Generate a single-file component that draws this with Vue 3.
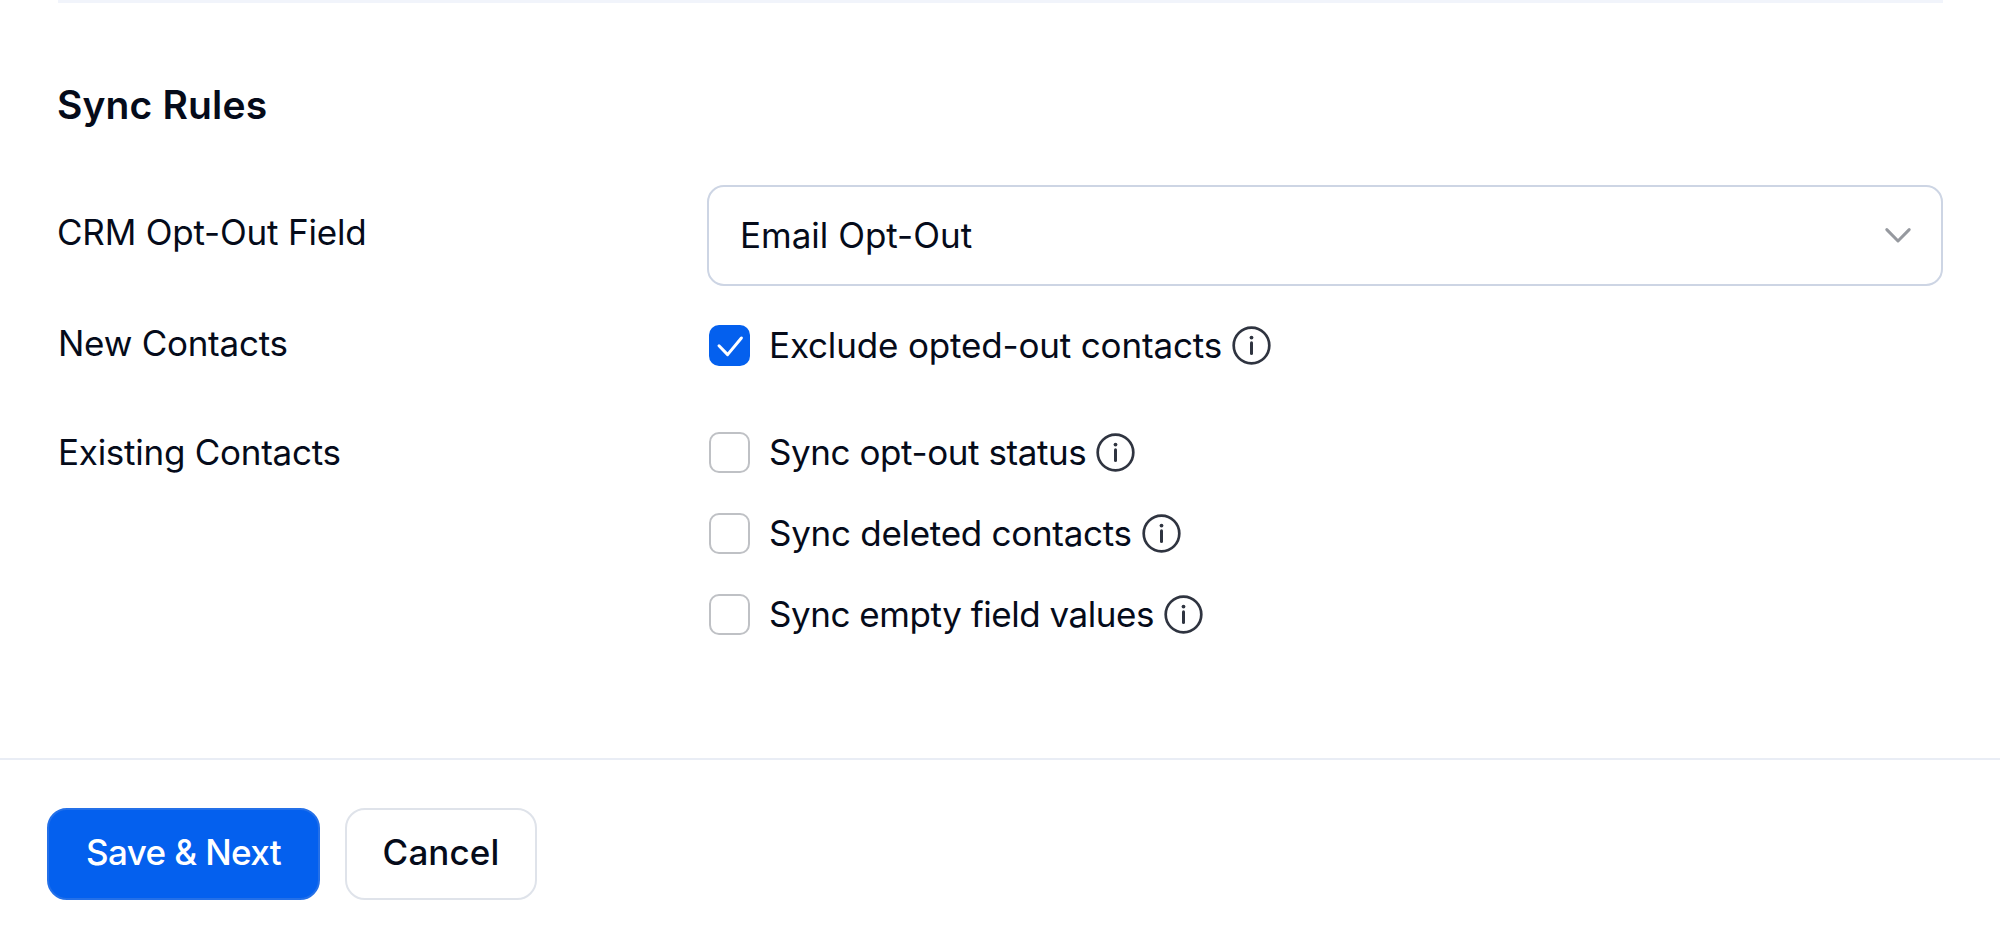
<!-- SyncRules.vue -->
<template>
  <div class="sync-page">
    <section class="rules">
      <h2 class="rules-title">Sync Rules</h2>

      <div class="rule-row rule-row-field">
        <span class="rule-label">CRM Opt-Out Field</span>
        <button type="button" class="select">
          <span class="select-value">{{ optOutField }}</span>
          <svg
            xmlns="http://www.w3.org/2000/svg"
            class="select-arrow"
            viewBox="0 0 28 18"
            fill="none"
          >
            <path
              d="M2.8 2.6L14 14L25.2 2.6"
              stroke="currentColor"
              stroke-width="3"
              stroke-linecap="round"
              stroke-linejoin="round"
            />
          </svg>
        </button>
      </div>

      <div
        v-for="group in groups"
        :key="group.id"
        class="rule-row"
        :class="`rule-row-${group.id}`"
      >
        <span class="rule-label">{{ group.label }}</span>
        <div class="options">
          <label
            v-for="option in group.options"
            :key="option.id"
            class="option"
          >
            <input v-model="option.checked" type="checkbox" class="option-input" />
            <span class="checkbox" :class="{ checked: option.checked }">
              <svg
                v-if="option.checked"
                xmlns="http://www.w3.org/2000/svg"
                class="checkmark"
                viewBox="0 0 41 41"
                fill="none"
              >
                <path
                  d="M10 20.8L18.6 29.6L32.4 13"
                  stroke="currentColor"
                  stroke-width="3"
                  stroke-linecap="round"
                  stroke-linejoin="round"
                />
              </svg>
            </span>
            <span class="option-label" :class="`option-label-${option.id}`">{{
              option.label
            }}</span>
            <svg
              xmlns="http://www.w3.org/2000/svg"
              class="info-icon"
              viewBox="0 0 39 39"
              fill="none"
            >
              <circle
                cx="19.5"
                cy="19.5"
                r="17.8"
                stroke="currentColor"
                stroke-width="2.7"
              />
              <circle cx="19.5" cy="11.6" r="1.9" fill="currentColor" />
              <path
                d="M19.5 16.8V27.6"
                stroke="currentColor"
                stroke-width="3"
                stroke-linecap="round"
              />
            </svg>
          </label>
        </div>
      </div>
    </section>

    <footer class="actions">
      <button type="button" class="btn btn-primary">Save &amp; Next</button>
      <button type="button" class="btn btn-cancel">Cancel</button>
    </footer>
  </div>
</template>

<script setup>
import { ref } from 'vue';

const optOutField = ref('Email Opt-Out');

const groups = ref([
  {
    id: 'new',
    label: 'New Contacts',
    options: [
      { id: 'exclude', label: 'Exclude opted-out contacts', checked: true },
    ],
  },
  {
    id: 'existing',
    label: 'Existing Contacts',
    options: [
      { id: 'status', label: 'Sync opt-out status', checked: false },
      { id: 'deleted', label: 'Sync deleted contacts', checked: false },
      { id: 'empty', label: 'Sync empty field values', checked: false },
    ],
  },
]);
</script>

<style>
body {
  margin: 0;
  background-color: #ffffff;
}
</style>

<style scoped>
.sync-page {
  box-sizing: border-box;
  display: flex;
  flex-direction: column;
  height: 949px;
  font-family: Inter, 'Liberation Sans', sans-serif;
  font-size: 35px;
  line-height: 42px;
  color: #050b1a;
  background-color: #ffffff;
}

.rules {
  flex: 1;
  margin: 0 57px 0 58px;
  border-top: 3px solid #f1f4fb;
}

.rules-title {
  margin: 78px 0 56px -1px;
  font-size: 39px;
  font-weight: 600;
  line-height: 48px;
  letter-spacing: 0.15px;
}

.rule-row {
  display: grid;
  grid-template-columns: 649px 1fr;
  align-items: start;
}

.rule-row-field {
  margin-bottom: 38px;
}

.rule-row-field .rule-label {
  margin-left: -1px;
  padding-top: 26px;
  letter-spacing: -0.2px;
}

.rule-row-new {
  margin-bottom: 65px;
}

.rule-row-new .rule-label {
  margin-top: -2px;
}

.rule-label {
  white-space: nowrap;
  letter-spacing: -0.25px;
}

.select {
  box-sizing: border-box;
  display: flex;
  align-items: center;
  justify-content: space-between;
  width: 100%;
  height: 101px;
  padding: 0 29px 2px 31px;
  border: 2px solid #cdd5e4;
  border-radius: 17px;
  background-color: #ffffff;
  color: inherit;
  font: inherit;
  cursor: pointer;
}

.select-arrow {
  width: 28px;
  height: 18px;
  margin-top: 2px;
  color: #96999f;
}

.options {
  display: flex;
  flex-direction: column;
  gap: 39px;
  padding-left: 2px;
}

.option {
  display: flex;
  align-items: center;
  height: 42px;
  cursor: pointer;
}

.option-input {
  position: absolute;
  width: 0;
  height: 0;
  margin: 0;
  opacity: 0;
}

.checkbox {
  box-sizing: border-box;
  flex-shrink: 0;
  width: 41px;
  height: 41px;
  margin-right: 19px;
  border: 2px solid #bfc1c5;
  border-radius: 10px;
}

.checkbox.checked {
  border: none;
  background-color: #0460ee;
}

.checkmark {
  display: block;
  width: 41px;
  height: 41px;
  color: #ffffff;
}

.option-label {
  margin-right: 10px;
  white-space: nowrap;
}

.option-label-exclude {
  letter-spacing: -0.16px;
}

.option-label-status {
  letter-spacing: -0.42px;
}

.option-label-deleted {
  letter-spacing: -0.28px;
}

.option-label-empty {
  letter-spacing: -0.46px;
}

.info-icon {
  width: 39px;
  height: 39px;
  color: #2f3440;
}

.actions {
  box-sizing: border-box;
  display: flex;
  gap: 25px;
  height: 191px;
  padding: 48px 0 0 47px;
  border-top: 2px solid #e9edf5;
}

.btn {
  box-sizing: border-box;
  height: 92px;
  padding: 0 0 4px;
  border-radius: 20px;
  font: inherit;
  font-weight: 500;
  cursor: pointer;
}

.btn-primary {
  width: 273px;
  border: 2px solid #2470e8;
  background-color: #0460ee;
  color: #ffffff;
  letter-spacing: -0.6px;
}

.btn-cancel {
  width: 192px;
  border: 2px solid #dfe3ea;
  background-color: #ffffff;
  color: #050b1a;
  letter-spacing: 0.1px;
}
</style>
